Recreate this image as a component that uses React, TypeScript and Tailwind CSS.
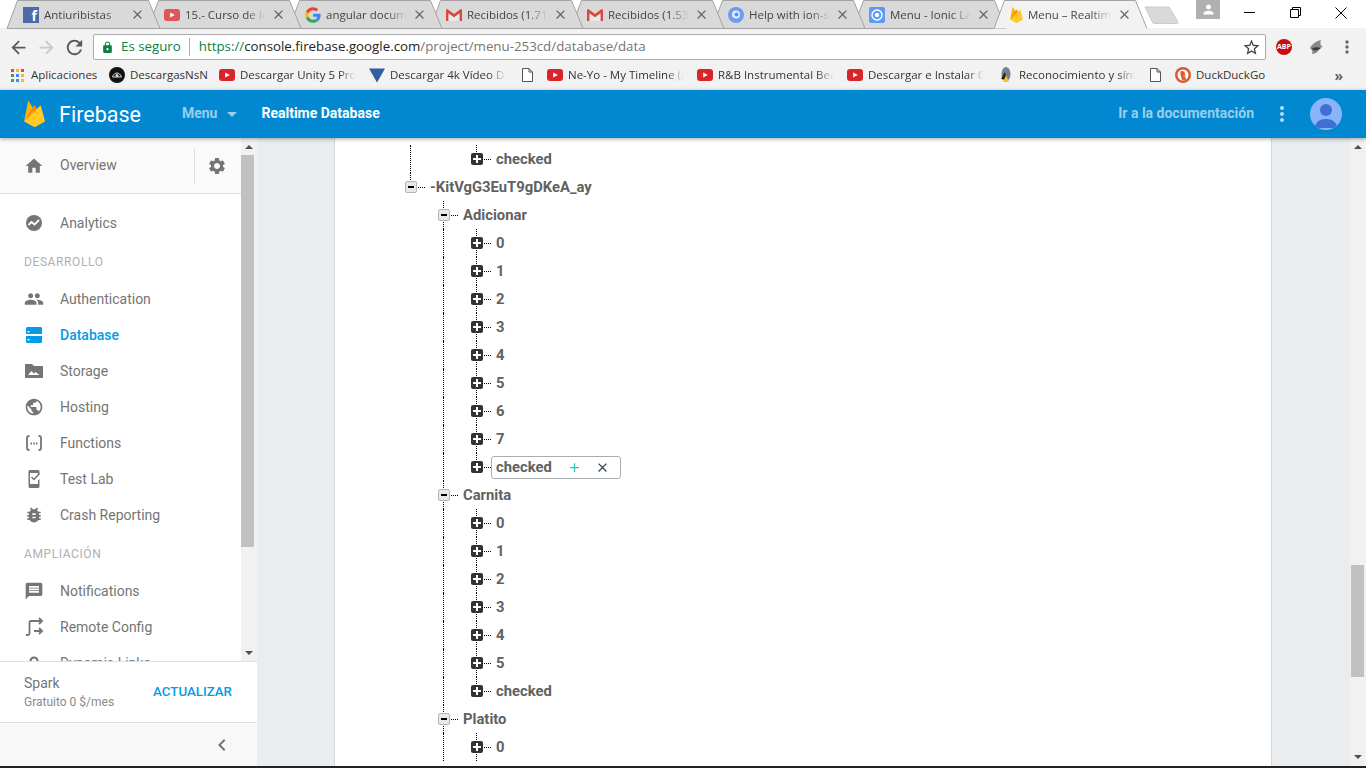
import React from 'react';
import {
  MdArrowBack,
  MdArrowForward,
  MdRefresh,
  MdLock,
  MdStarBorder,
  MdMoreVert,
  MdHome,
  MdSettings,
  MdPeople,
  MdPublic,
  MdBugReport,
  MdMessage,
  MdChevronLeft,
  MdClose,
  MdAdd,
  MdPerson,
} from 'react-icons/md';

const FirebaseLogo = ({ size = 16 }: { size?: number }) => (
  <svg width={size * 0.81} height={size} viewBox="0 0 21 26" className="shrink-0">
    <path d="M0 20.500 4 .8c.1-.5.7-.6 1-.2L10.500 10z" fill="#ffb300" />
    <path d="M0 20.500 9.800 4.500c.3-.4.8-.4 1 0L15 12z" fill="#f98a0c" />
    <path d="M0 20.500 15.800 5c.5-.5 1.200-.2 1.300.4L21 20.500l-9.400 5.200c-.6.3-1.300.3-1.900 0z" fill="#ffca28" />
  </svg>
);

const YouTubeIcon = ({ fade = false }: { fade?: boolean }) => (
  <svg width="16" height="12" viewBox="0 0 16 12" className="shrink-0">
    <rect width="16" height="12" rx="3" fill={fade ? '#e05555' : '#d9252a'} />
    <path d="M6.200 3.400 10.800 6l-4.600 2.600z" fill="#fff" />
  </svg>
);

const GmailIcon = () => (
  <svg width="16" height="12" viewBox="0 0 16 12" className="shrink-0">
    <path d="M0 12V1.500C0 .6.6 0 1.300 0L8 5l6.700-5c.7 0 1.300.6 1.300 1.500V12h-2.600V4.600L8 8.600l-5.400-4V12z" fill="#d9493d" />
    <path d="M2.600 12V4.600L8 8.600l5.400-4V12z" fill="#e8e8e8" />
  </svg>
);

const GoogleIcon = () => (
  <svg width="16" height="16" viewBox="0 0 48 48" className="shrink-0">
    <path fill="#ea4335" d="M24 10c3.500 0 6.700 1.300 9.100 3.500l6.800-6.800C35.700 2.900 30.200 0.500 24 .5 14.700.5 6.700 5.800 2.800 13.500l7.900 6.100C12.600 14 17.800 10 24 10z" />
    <path fill="#4285f4" d="M47 24.500c0-1.600-.2-3.200-.4-4.500H24v9h13c-.6 3-2.200 5.500-4.800 7.200l7.700 6C44.300 38.100 47 31.900 47 24.500z" />
    <path fill="#fbbc05" d="M10.700 28.600c-.5-1.400-.7-3-.7-4.600s.3-3.200.7-4.600l-7.900-6C1.300 16.500.5 20.100.5 24s.8 7.500 2.300 10.600z" />
    <path fill="#34a853" d="M24 47.500c6.200 0 11.500-2 15.300-5.500l-7.700-6c-2.100 1.400-4.700 2.300-7.600 2.300-6.200 0-11.400-4-13.300-9.600l-7.900 6.100C6.700 42.200 14.700 47.500 24 47.500z" />
  </svg>
);

const tabs = [
  { title: 'Antiuribistas', icon: <span className="flex h-4 w-4 shrink-0 items-end justify-end bg-[#4c69a8] pr-[2px] text-[14px] font-bold leading-[15px] text-white">f</span> },
  { title: '15.- Curso de Ionic', icon: <YouTubeIcon fade /> },
  { title: 'angular documentation', icon: <GoogleIcon /> },
  { title: 'Recibidos (1.71', icon: <GmailIcon /> },
  { title: 'Recibidos (1.53', icon: <GmailIcon /> },
  {
    title: 'Help with ion-select',
    icon: (
      <svg width="16" height="16" viewBox="0 0 16 16" className="shrink-0">
        <circle cx="8" cy="8" r="8" fill="#6c9df2" />
        <circle cx="8" cy="7.500" r="4" fill="#e4edfd" />
        <circle cx="8.500" cy="7.500" r="2" fill="#5b90ef" />
      </svg>
    ),
  },
  {
    title: 'Menu - Ionic Lab',
    icon: (
      <svg width="16" height="16" viewBox="0 0 16 16" className="shrink-0">
        <rect width="16" height="16" rx="2" fill="#5c9bf5" />
        <circle cx="8" cy="8" r="5" fill="none" stroke="#fff" strokeWidth="1.400" />
        <circle cx="8" cy="8" r="2.200" fill="#fff" />
      </svg>
    ),
  },
  { title: 'Menu – Realtime', icon: <FirebaseLogo size={16} />, active: true },
];

const TabShape = ({ active }: { active?: boolean }) => (
  <svg width="162" height="29" viewBox="0 0 162 29" className="absolute left-0 top-0">
    <path d="M7 28.500 17.500.5h131L160 28.500" fill={active ? '#f2f2f2' : '#d9d9d9'} stroke="#a3a3a3" />
    {!active && <path d="M7 28.500h153" stroke="#a3a3a3" />}
  </svg>
);

function AppsIcon() {
  const colors = ['#ea4335', '#fbbc05', '#ea4335', '#34a853', '#4285f4', '#fbbc05', '#34a853', '#4285f4', '#fbbc05'];
  return (
    <span className="mr-[2px] grid h-[13px] w-[13px] shrink-0 grid-cols-3 gap-[2px]">
      {colors.map((c, i) => (
        <span key={i} style={{ backgroundColor: c }} />
      ))}
    </span>
  );
}

function DocIcon() {
  return (
    <svg width="11" height="14" viewBox="0 0 11 14" className="shrink-0">
      <path d="M.5.500h6.500l3.500 3.500v9.500H.5z M7 .5V4h3.500" fill="#fff" stroke="#555" />
    </svg>
  );
}

const bookmarks = [
  { w: 'w-[98px]', label: 'Aplicaciones', icon: <AppsIcon /> },
  {
    w: 'w-[110px]',
    label: 'DescargasNsN',
    icon: (
      <svg width="16" height="16" viewBox="0 0 16 16" className="shrink-0">
        <circle cx="8" cy="8" r="8" fill="#111" />
        <path d="M3.500 10c1-3 3-4 4.500-4s3.500 1 4.500 4H3.500z" fill="none" stroke="#ddd" />
        <circle cx="8" cy="8.500" r="1.500" fill="#ddd" />
      </svg>
    ),
  },
  { w: 'w-[150px]', label: 'Descargar Unity 5 Pro Full', icon: <YouTubeIcon />, clip: true },
  { w: 'w-[153px]', label: 'Descargar 4k Vídeo Downloader', clip: true, icon: <svg width="16" height="16" viewBox="0 0 16 16" className="shrink-0"><path d="M0 1.500h16L8 15.500z" fill="#2f5f9f" /></svg> },
  { w: 'w-[25px]', label: '', icon: <DocIcon /> },
  { w: 'w-[150px]', label: 'Ne-Yo - My Timeline (Audio)', icon: <YouTubeIcon />, clip: true },
  { w: 'w-[150px]', label: 'R&B Instrumental Beats', icon: <YouTubeIcon />, clip: true },
  { w: 'w-[151px]', label: 'Descargar e Instalar Cualquier', icon: <YouTubeIcon />, clip: true },
  { w: 'w-[152px]', label: 'Reconocimiento y síntomas', clip: true, icon: <svg width="16" height="18" viewBox="0 0 16 18" className="shrink-0"><ellipse cx="8" cy="8" rx="4.500" ry="7" fill="#77808c" /><path d="M3 13 7 6l2 8z" fill="#1f1f1f" /><path d="M8 9l3 7H5z" fill="#f2c230" /></svg> },
  { w: 'w-[25px]', label: '', icon: <DocIcon /> },
  { w: 'w-[100px]', label: 'DuckDuckGo', icon: <svg width="16" height="16" viewBox="0 0 16 16" className="shrink-0"><circle cx="8" cy="8" r="8" fill="#de5833" /><circle cx="8" cy="8" r="5.500" fill="#fff" /><path d="M5.500 4.500c2-1 4.500 0 4.500 2.500 0 2 .5 4 1 6H7c-.5-3-2-5-1.500-8.500z" fill="#de5833" /><path d="M8 8.500h3.500L9 10z" fill="#f5c518" /><path d="M7.500 11.500l2.500.5v1.500l-2.500-.5z" fill="#4caf50" /></svg> },
];

const AnalyticsIcon = () => (
  <svg width="24" height="24" viewBox="0 0 24 24" fill="#757575">
    <path d="M12 4a8 8 0 1 0 0 16 8 8 0 0 0 0-16z" />
    <path d="m6.500 14 3-3 3 2.500 4.500-4.500" fill="none" stroke="#fff" strokeWidth="1.800" />
  </svg>
);
const DatabaseIcon = () => (
  <svg width="24" height="24" viewBox="0 0 24 24" fill="#039be5">
    <path d="M5.500 4h13c.8 0 1.500.7 1.500 1.500V11H4V5.500C4 4.700 4.700 4 5.500 4zM4 13h16v5.500c0 .8-.7 1.500-1.500 1.500h-13c-.8 0-1.500-.7-1.500-1.500z" />
    <rect x="5.500" y="8" width="2" height="1.400" fill="#fff" />
    <rect x="5.500" y="16" width="2" height="1.400" fill="#fff" />
  </svg>
);
const StorageIcon = () => (
  <svg width="24" height="24" viewBox="0 0 24 24" fill="#757575">
    <path d="M4 5h6l2 2h8c.6 0 1 .4 1 1v10c0 .6-.4 1-1 1H4c-.6 0-1-.4-1-1V6c0-.6.4-1 1-1z" />
    <path d="m6 16 3.500-4 2.500 2.500 1.500-1.500 4 3z" fill="#fff" />
  </svg>
);
const FunctionsIcon = () => (
  <svg width="24" height="24" viewBox="0 0 24 24" fill="none" stroke="#757575" strokeWidth="1.800">
    <path d="M7.500 5H7C5.500 5 5 6 5 7v10c0 1 .5 2 2 2h.5M16.500 5h.5c1.500 0 2 1 2 2v10c0 1-.5 2-2 2h-.5" />
    <path d="M8.500 12.500h1.500M11.300 12.500h1.500M14 12.500h1.500" />
  </svg>
);
const TestLabIcon = () => (
  <svg width="24" height="24" viewBox="0 0 24 24" fill="#757575">
    <path d="M8 3h8c.8 0 1.500.7 1.500 1.500V7L16 8.500V6H8v11h8v-3.500l1.500-1.500v7.500c0 .8-.7 1.500-1.500 1.500H8c-.8 0-1.500-.7-1.500-1.500v-15C6.500 3.700 7.200 3 8 3z" />
    <path d="m9.500 10 2.500 2.500 5.500-6" fill="none" stroke="#757575" strokeWidth="1.500" />
  </svg>
);
const RemoteIcon = () => (
  <svg width="24" height="24" viewBox="0 0 24 24" fill="none" stroke="#757575" strokeWidth="1.800">
    <path d="M4 20h2c1 0 1.500-.7 1.500-1.500V7.500C7.500 6.700 8 6 9 6h10M12 16h8" />
    <path d="M17 3l3 3-3 3M17 13l3 3-3 3" />
  </svg>
);
const LinksIcon = () => (
  <svg width="24" height="24" viewBox="0 0 24 24" fill="none" stroke="#757575" strokeWidth="2">
    <path d="M8.500 10.500C8.500 8 10 6.500 12 6.500s3.500 1.500 3.500 3.500c0 1-.5 2-1.500 3" />
  </svg>
);

const gray = { color: '#757575' };

const navGroups = [
  { head: '', items: [{ label: 'Analytics', icon: <AnalyticsIcon /> }] },
  {
    head: 'DESARROLLO',
    items: [
      { label: 'Authentication', icon: <MdPeople size={20} style={gray} /> },
      { label: 'Database', icon: <DatabaseIcon />, active: true },
      { label: 'Storage', icon: <StorageIcon /> },
      { label: 'Hosting', icon: <MdPublic size={20} style={gray} /> },
      { label: 'Functions', icon: <FunctionsIcon /> },
      { label: 'Test Lab', icon: <TestLabIcon /> },
      { label: 'Crash Reporting', icon: <MdBugReport size={20} style={gray} /> },
    ],
  },
  {
    head: 'AMPLIACIÓN',
    items: [
      { label: 'Notifications', icon: <MdMessage size={20} style={gray} /> },
      { label: 'Remote Config', icon: <RemoteIcon /> },
      { label: 'Dynamic Links', icon: <LinksIcon /> },
    ],
  },
];

type Row = {
  label: string;
  depth: number;
  open?: boolean;
  through?: number[];
  down?: boolean;
  selected?: boolean;
};

const childRows = (labels: string[], lastDown: boolean): Row[] =>
  labels.map((label, i) => ({
    label,
    depth: 2,
    through: [1],
    down: i < labels.length - 1 || lastDown,
  }));

const rows: Row[] = [
  { label: 'checked', depth: 2, through: [0] },
  { label: '-KitVgG3EuT9gDKeA_ay', depth: 0, open: true },
  { label: 'Adicionar', depth: 1, open: true, down: true },
  ...childRows(['0', '1', '2', '3', '4', '5', '6', '7'], true),
  { label: 'checked', depth: 2, through: [1], selected: true },
  { label: 'Carnita', depth: 1, open: true, down: true },
  ...childRows(['0', '1', '2', '3', '4', '5', 'checked'], false),
  { label: 'Platito', depth: 1, open: true, down: true },
  ...childRows(['0'], true),
];

const guideX = ['left-[75px]', 'left-[108px]', 'left-[141px]'];
const rowPad = ['pl-[70px]', 'pl-[103px]', 'pl-[136px]'];

const TreeRow = ({ row }: { row: Row }) => (
  <div className={`relative flex h-[28px] items-center ${rowPad[row.depth]}`}>
    {(row.through || []).map((d) => (
      <span key={d} className={`absolute inset-y-0 border-l border-dotted border-black ${guideX[d]}`} />
    ))}
    <span className={`absolute top-0 h-[9px] border-l border-dotted border-black ${guideX[row.depth]}`} />
    {row.down && <span className={`absolute bottom-0 h-[7px] border-l border-dotted border-black ${guideX[row.depth]}`} />}
    {row.open ? (
      <span className="z-10 flex h-[12px] w-[12px] shrink-0 items-center justify-center rounded-[2px] border border-[#b5b5b5] bg-[#e8e8e8]">
        <span className="h-[2px] w-[6px] bg-black" />
      </span>
    ) : (
      <span className="z-10 flex h-[12px] w-[12px] shrink-0 items-center justify-center rounded-[2px] bg-[#333]">
        <svg width="8" height="8" viewBox="0 0 8 8" fill="#fff">
          <path d="M3 0h2v3h3v2H5v3H3V5H0V3h3z" />
        </svg>
      </span>
    )}
    <span className="ml-[1px] w-[7px] shrink-0 border-t border-dotted border-black" />
    {row.selected ? (
      <span className="flex h-[23px] w-[130px] items-center rounded-[3px] border border-[#a9adb3] pl-[4px]">
        <span className="text-[14.800px] font-bold text-[#616161]">{row.label}</span>
        <MdAdd size={15} className="ml-[15px] text-[#26c6b5]" />
        <MdClose size={15} className="ml-[13px] text-[#37474f]" />
      </span>
    ) : (
      <span className="pl-[5px] text-[14.800px] font-bold text-[#616161]">{row.label}</span>
    )}
  </div>
);

const ArrowUp = () => <span className="block h-0 w-0 border-x-[4px] border-b-[4px] border-x-transparent border-b-[#505050]" />;
const ArrowDown = () => <span className="block h-0 w-0 border-x-[4px] border-t-[4px] border-x-transparent border-t-[#505050]" />;

export default function App() {
  return (
    <div className="flex h-[768px] w-[1366px] flex-col overflow-hidden bg-white font-['Roboto',sans-serif]">
      {/* tab strip */}
      <div className="relative flex h-[28px] shrink-0 font-['Open_Sans',sans-serif] text-[11.500px] text-[#444]">
        {tabs.map((t, i) => (
          <div
            key={i}
            className="relative mr-[-9px] flex h-[28px] w-[150px] shrink-0 items-center pl-[23px] pr-[5px] pt-[1px]"
            style={{ zIndex: t.active ? 20 : 10 - i }}
          >
            <TabShape active={t.active} />
            <span className="relative">{t.icon}</span>
            <span className="relative ml-[5px] min-w-0 flex-1 overflow-hidden whitespace-nowrap [mask-image:linear-gradient(to_right,black_72%,transparent_95%)]">
              {t.title}
            </span>
            <MdClose size={15} className="relative ml-[1px] shrink-0 text-[#666]" />
          </div>
        ))}
        <svg width="36" height="20" viewBox="0 0 36 20" className="absolute left-[1144px] top-[6px]">
          <path d="M1 1h24l9 15c.3.700 0 1.500-1 1.500H10c-.6 0-1-.2-1.300-.8z" fill="#d9d9d9" stroke="#ccc" />
        </svg>
        <span className="absolute left-[1196px] top-0 flex h-[19px] w-[24px] items-center justify-center bg-[#b0b0b0]">
          <MdPerson size={15} className="text-white" />
        </span>
        <div className="absolute right-[2px] top-0 flex h-[28px] text-[#111]">
          <span className="flex w-[46px] items-center justify-center pb-[3px]">
            <span className="h-px w-[11px] bg-black" />
          </span>
          <span className="flex w-[46px] items-center justify-center pb-[3px]">
            <svg width="11" height="11" viewBox="0 0 11 11" fill="none" stroke="#000">
              <path d="M.5 2.500h8v8h-8zM2.500 2.500v-2h8v8h-2" />
            </svg>
          </span>
          <span className="flex w-[46px] items-center justify-center pb-[3px]">
            <svg width="12" height="12" viewBox="0 0 12 12" stroke="#000">
              <path d="M.5.500l11 11M11.500.500l-11 11" />
            </svg>
          </span>
        </div>
      </div>

      {/* toolbar */}
      <div className="flex h-[34px] shrink-0 items-center bg-[#f2f2f2] pl-[8px] pt-[4px] font-['Open_Sans',sans-serif]">
        <MdArrowBack size={21} className="text-[#5a5a5a]" />
        <MdArrowForward size={21} className="ml-[7px] text-[#c8c8c8]" />
        <MdRefresh size={23} className="ml-[6px] text-[#5a5a5a]" />
        <div className="ml-[7px] flex h-[26px] w-[1173px] items-center rounded-[2px] border border-[#aaa] bg-white pl-[7px] pr-[4px] text-[13.300px]">
          <MdLock size={13} className="text-[#0b8043]" />
          <span className="ml-[7px] text-[#0b8043]">Es seguro</span>
          <span className="ml-[8px] h-[18px] w-px bg-[#aaa]" />
          <span className="ml-[9px] whitespace-nowrap text-[#757575]">
            <span className="text-[#0b8043]">https://</span>
            <span className="text-[#222]">console.firebase.google.com</span>
            /project/menu-253cd/database/data
          </span>
          <MdStarBorder size={19} className="ml-auto text-[#444]" />
        </div>
        <span className="ml-[10px] flex h-[16px] w-[16px] items-center justify-center rounded-full bg-[#c70d0d] text-[7px] font-bold text-white">ABP</span>
        <svg width="16" height="16" viewBox="0 0 16 16" className="ml-[17px]">
          <path d="M1 9c2-4 6-7 11-8-1 3-1 5 2 7-2 0-3 1-4 3-2 3-5 4-7 4 1-2 0-4-2-6z" fill="#8a8a8a" />
          <path d="M3 9c3-1 6-1 9 0-2 2-6 3-8 2z" fill="#3c3c3c" />
        </svg>
        <MdMoreVert size={20} className="ml-[12px] text-[#666]" />
      </div>

      {/* bookmarks */}
      <div className="flex h-[28px] shrink-0 items-center bg-[#f2f2f2] pb-[2px] pl-[11px] font-['Open_Sans',sans-serif] text-[11.500px] text-[#333]">
        {bookmarks.map((b, i) => (
          <div key={i} className={`flex shrink-0 items-center gap-[5px] ${b.w}`}>
            {b.icon}
            {b.label && (
              <span
                className={`min-w-0 overflow-hidden whitespace-nowrap ${b.clip ? 'w-[116px] [mask-image:linear-gradient(to_right,black_85%,transparent)]' : ''}`}
              >
                {b.label}
              </span>
            )}
          </div>
        ))}
        <span className="ml-auto mr-[23px] text-[14px] font-bold text-[#666]">»</span>
      </div>

      {/* firebase app bar */}
      <header className="relative z-10 flex h-[48px] shrink-0 items-center bg-[#0288d1] pl-[24px] pr-[24px] shadow-[0_1px_4px_rgba(0,0,0,0.35)]">
        <FirebaseLogo size={26} />
        <span className="ml-[14px] mt-[2px] text-[21.500px] leading-none text-white">Firebase</span>
        <span className="mb-[2px] ml-[41px] text-[14px] font-bold text-white/60">Menu</span>
        <span className="ml-[10px] h-0 w-0 border-x-[5px] border-t-[5px] border-x-transparent border-t-white/60" />
        <span className="mb-[2px] ml-[24px] text-[14px] font-bold text-white">Realtime Database</span>
        <span className="mb-[2px] ml-auto text-[14px] font-bold text-white/60">Ir a la documentación</span>
        <MdMoreVert size={24} className="ml-[16px] text-white/70" />
        <span className="ml-[16px] flex h-[32px] w-[32px] items-center justify-center overflow-hidden rounded-full bg-[#8ab4f8]">
          <svg width="32" height="32" viewBox="0 0 32 32" fill="#3f6ed4">
            <circle cx="16" cy="12" r="6" />
            <path d="M5 30c0-6 5-9 11-9s11 3 11 9z" />
          </svg>
        </span>
      </header>

      <div className="flex min-h-0 flex-1">
        {/* sidebar */}
        <aside className="flex w-[257px] shrink-0 flex-col bg-white">
          <div className="flex min-h-0 flex-1">
            <div className="flex min-w-0 flex-1 flex-col">
              <div className="flex h-[56px] shrink-0 items-center border-b border-[#e0e0e0] bg-[#fafafa] pl-[22px]">
                <span className="flex w-[24px] justify-center">
                  <MdHome size={20} className="text-[#757575]" />
                </span>
                <span className="ml-[14px] text-[14px] text-[#757575]">Overview</span>
                <span className="ml-auto h-[36px] w-px bg-[#e0e0e0]" />
                <span className="flex w-[46px] items-center justify-center pr-[2px]">
                  <MdSettings size={20} className="text-[#757575]" />
                </span>
              </div>
              <nav className="min-h-0 flex-1 overflow-hidden pt-[11px]">
                {navGroups.map((g) => (
                  <div key={g.head || 'top'}>
                    {g.head && (
                      <div className="flex h-[40px] items-center pl-[24px] pt-[2px] text-[12px] tracking-[0.6px] text-[#b0b0b0]">
                        {g.head}
                      </div>
                    )}
                    {g.items.map((item) => (
                      <div key={item.label} className="flex h-[36px] items-center pl-[22px]">
                        <span className="flex w-[24px] justify-center">{item.icon}</span>
                        <span className={`ml-[14px] text-[14px] ${item.active ? 'font-medium text-[#039be5]' : 'text-[#757575]'}`}>
                          {item.label}
                        </span>
                      </div>
                    ))}
                  </div>
                ))}
              </nav>
            </div>
            <div className="flex w-[16px] shrink-0 flex-col items-center bg-[#f1f1f1] pb-[6px] pt-[7px]">
              <ArrowUp />
              <span className="mt-[6px] h-[392px] w-[13px] self-start bg-[#c1c1c1]" />
              <span className="mt-auto flex"><ArrowDown /></span>
            </div>
          </div>
          <div className="flex h-[62px] shrink-0 items-center justify-between border-y border-[#e0e0e0] bg-white pl-[24px] pr-[25px]">
            <div>
              <div className="text-[14px] leading-[18px] text-[#757575]">Spark</div>
              <div className="pt-[1px] text-[12px] leading-[18px] text-[#8a8a8a]">Gratuito 0 $/mes</div>
            </div>
            <span className="text-[13.300px] font-medium text-[#039be5]">ACTUALIZAR</span>
          </div>
          <div className="flex h-[43px] shrink-0 items-center justify-end bg-[#f8f8f8] pr-[23px]">
            <MdChevronLeft size={24} className="text-[#757575]" />
          </div>
        </aside>

        {/* database tree */}
        <main className="flex min-w-0 flex-1 bg-[#e9edf0]">
          <div className="min-w-0 flex-1 overflow-hidden pl-[77px]">
            <div className="h-full w-[938px] border-x border-[#d5d8da] bg-white pt-[7px]">
              {rows.map((row, i) => (
                <TreeRow key={i} row={row} />
              ))}
            </div>
          </div>
          <div className="flex w-[16px] shrink-0 flex-col items-center bg-[#f1f1f1] pb-[7px] pt-[7px]">
            <ArrowUp />
            <span className="ml-[1px] mt-[416px] h-[112px] w-[13px] self-start bg-[#c1c1c1]" />
            <span className="mt-auto flex"><ArrowDown /></span>
          </div>
        </main>
      </div>
      <div className="h-[2px] shrink-0 bg-[#222]" />
    </div>
  );
}
